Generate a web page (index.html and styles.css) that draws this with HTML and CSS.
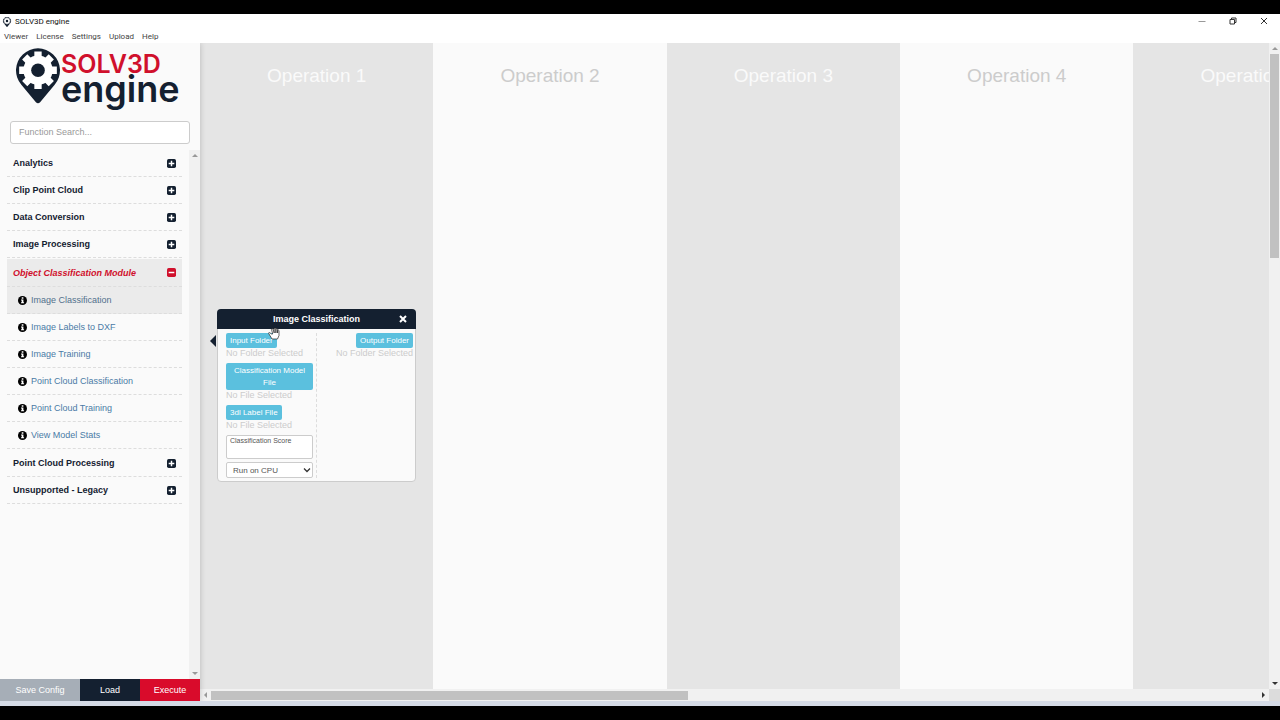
FILE: index.html
```html
<!DOCTYPE html>
<html lang="en">
<head>
    <meta charset="UTF-8">
    <meta name="viewport" content="width=device-width, initial-scale=1.0">
    <title>SOLV3D engine</title>
    <link rel="stylesheet" href="styles.css">
</head>
<body>
    <!-- Shared icons -->
    <svg class="icon-defs" width="0" height="0" aria-hidden="true">
        <symbol id="pin" viewBox="0 0 42 53">
            <path fill="#142030" d="M5.100 34.800A21 21 0 1 1 36.900 34.800L23 51.500Q21 53.500 19 51.500z"/>
            <circle cx="21" cy="21" r="14" fill="#fff"/>
            <path stroke="#fff" stroke-width="7" d="M21 3v36M3 21h36M8.300 8.300l25.400 25.400M33.700 8.300L8.300 33.700"/>
            <circle cx="21" cy="21" r="6.5" fill="#142030"/>
        </symbol>
        <symbol id="plus" viewBox="0 0 16 16">
            <rect width="16" height="16" rx="3" fill="currentColor"/>
            <path d="M8 3v10M3 8h10" stroke="#fff" stroke-width="2.6"/>
        </symbol>
        <symbol id="minus" viewBox="0 0 16 16">
            <rect width="16" height="16" rx="3" fill="currentColor"/>
            <path d="M3 8h10" stroke="#fff" stroke-width="2.6"/>
        </symbol>
        <symbol id="info" viewBox="0 0 16 16">
            <circle cx="8" cy="8" r="8" fill="#000"/>
            <path fill="#fff" d="M6.600 2.400h3v2.400h-3zM5.400 6h4.200v5h1.200v2H5.400v-2h1.200V8H5.400z"/>
        </symbol>
    </svg>

    <div class="window">
        <header class="titlebar">
            <svg class="app-icon"><use href="#pin"/></svg>
            <span class="app-title">SOLV3D engine</span>
            <div class="window-controls">
                <button type="button" aria-label="Minimize"><svg class="thin" viewBox="0 0 8 8"><path d="M0.500 4.500h7"/></svg></button>
                <button type="button" aria-label="Restore"><svg viewBox="0 0 8 8"><path d="M1 2.500h4.500V7H1zM2.500 2.500V1H7v4.500H5.500"/></svg></button>
                <button type="button" aria-label="Close"><svg viewBox="0 0 8 8"><path d="M1 1l6 6M7 1L1 7"/></svg></button>
            </div>
        </header>
        <nav class="menubar">
            <a href="#">Viewer</a>
            <a href="#">License</a>
            <a href="#">Settings</a>
            <a href="#">Upload</a>
            <a href="#">Help</a>
        </nav>

        <div class="workspace">
            <aside class="sidebar">
                <div class="logo">
                    <svg class="logo-pin"><use href="#pin"/></svg>
                    <div class="logo-text">
                        <div class="logo-name">SOLV3D</div>
                        <div class="logo-sub">engine</div>
                    </div>
                </div>
                <input class="search" type="text" placeholder="Function Search..." aria-label="Function Search">

                <div class="tree-wrap">
                    <ul class="tree">
                        <li><button type="button" class="group">Analytics<svg><use href="#plus"/></svg></button></li>
                        <li><button type="button" class="group">Clip Point Cloud<svg><use href="#plus"/></svg></button></li>
                        <li><button type="button" class="group">Data Conversion<svg><use href="#plus"/></svg></button></li>
                        <li><button type="button" class="group">Image Processing<svg><use href="#plus"/></svg></button></li>
                        <li class="open">
                            <button type="button" class="group">Object Classification Module<svg><use href="#minus"/></svg></button>
                            <ul class="functions">
                                <li class="active"><svg><use href="#info"/></svg><a href="#">Image Classification</a></li>
                                <li><svg><use href="#info"/></svg><a href="#">Image Labels to DXF</a></li>
                                <li><svg><use href="#info"/></svg><a href="#">Image Training</a></li>
                                <li><svg><use href="#info"/></svg><a href="#">Point Cloud Classification</a></li>
                                <li><svg><use href="#info"/></svg><a href="#">Point Cloud Training</a></li>
                                <li><svg><use href="#info"/></svg><a href="#">View Model Stats</a></li>
                            </ul>
                        </li>
                        <li><button type="button" class="group">Point Cloud Processing<svg><use href="#plus"/></svg></button></li>
                        <li><button type="button" class="group">Unsupported - Legacy<svg><use href="#plus"/></svg></button></li>
                    </ul>
                    <div class="scrollbar vertical">
                        <span class="arrow up"></span>
                        <span class="arrow down"></span>
                    </div>
                </div>

                <div class="actions">
                    <button type="button" class="btn-save">Save Config</button>
                    <button type="button" class="btn-load">Load</button>
                    <button type="button" class="btn-execute">Execute</button>
                </div>
            </aside>

            <main class="canvas-wrap">
                <div class="canvas">
                    <section class="operation"><h2>Operation 1</h2></section>
                    <section class="operation"><h2>Operation 2</h2></section>
                    <section class="operation"><h2>Operation 3</h2></section>
                    <section class="operation"><h2>Operation 4</h2></section>
                    <section class="operation"><h2>Operation 5</h2></section>

                    <!-- Function node -->
                    <div class="node">
                        <div class="node-header">
                            <span class="node-title">Image Classification</span>
                            <button type="button" class="node-close" aria-label="Remove"><svg viewBox="0 0 8 8"><path d="M1 1l6 6M7 1L1 7"/></svg></button>
                        </div>
                        <div class="node-body">
                            <div class="node-inputs">
                                <div class="port">
                                    <button type="button" class="btn-port">Input Folder</button>
                                    <span>No Folder Selected</span>
                                </div>
                                <div class="port">
                                    <button type="button" class="btn-port">Classification Model File</button>
                                    <span>No File Selected</span>
                                </div>
                                <div class="port">
                                    <button type="button" class="btn-port">3dl Label File</button>
                                    <span>No File Selected</span>
                                </div>
                                <textarea class="score" placeholder="Classification Score" aria-label="Classification Score"></textarea>
                                <div class="device">
                                    <select aria-label="Device">
                                        <option>Run on CPU</option>
                                        <option>Run on GPU</option>
                                    </select>
                                    <svg viewBox="0 0 8 8"><path d="M1 2.500l3 3 3-3"/></svg>
                                </div>
                            </div>
                            <div class="node-outputs">
                                <div class="port">
                                    <button type="button" class="btn-port">Output Folder</button>
                                    <span>No Folder Selected</span>
                                </div>
                            </div>
                        </div>
                        <svg class="hand" viewBox="0 0 12 13"><path d="M3.500 7L1.500 5.500Q0 5.500 1 7l3 5h5.500l1.500-3.500V3.500Q10.300 2.500 9.600 3.500V6 2.200Q8.600 1 7.900 2.200V6 1.500Q7 0.300 6.200 1.500V6L5 2Q4 1.200 3.500 2.300L4.700 7z"/></svg>
                    </div>
                </div>
                <div class="scrollbar vertical">
                    <span class="arrow up"></span>
                    <span class="thumb"></span>
                    <span class="arrow down dark"></span>
                </div>
                <div class="scrollbar horizontal">
                    <span class="arrow left"></span>
                    <span class="thumb"></span>
                    <span class="arrow right dark"></span>
                </div>
                <div class="corner"></div>
            </main>
        </div>
        <div class="taskbar"></div>
    </div>
</body>
</html>
```

FILE: styles.css
```css
* {
    box-sizing: border-box;
}

body {
    margin: 0;
    background-color: #000;
    font-family: "Liberation Sans", Arial, sans-serif;
    font-size: 9px;
    color: #142030;
}

button {
    font-family: inherit;
    border: none;
    cursor: pointer;
}

ul {
    list-style: none;
    margin: 0;
    padding: 0;
}

.icon-defs {
    position: absolute;
}

/* Window frame */
.window {
    display: flex;
    flex-direction: column;
    height: 100vh;
    padding: 14px 0;
}

.titlebar {
    display: flex;
    align-items: center;
    height: 15px;
    flex: none;
    padding-left: 2px;
    background-color: #fff;
}

.app-icon {
    width: 10px;
    height: 10px;
    margin-right: 3px;
}

.app-title,
.menubar {
    font-family: Roboto, "Open Sans", sans-serif;
    font-size: 8px;
}

.app-title {
    color: #111;
}

.window-controls {
    display: flex;
    margin-left: auto;
}

.window-controls button {
    width: 30px;
    height: 14px;
    padding: 0 0 2px;
    margin-right: 1px;
    background: none;
}

.window-controls svg {
    display: block;
    width: 8px;
    height: 8px;
    margin: 0 auto;
    fill: none;
    stroke: #333;
    stroke-width: 1;
}

.window-controls .thin {
    stroke: #999;
}

.menubar {
    display: flex;
    gap: 8px;
    flex: none;
    height: 14px;
    padding-left: 4px;
    line-height: 15px;
    background-color: #fff;
}

.menubar a {
    color: #444;
    text-decoration: none;
}

.workspace {
    display: flex;
    flex: 1;
    min-height: 0;
    overflow: hidden;
}

.taskbar {
    flex: none;
    height: 5px;
    background-color: #d5dbe6;
}

/* Sidebar */
.sidebar {
    display: flex;
    flex-direction: column;
    flex: none;
    width: 200px;
    background-color: #fafafa;
    box-shadow: 0 0 6px rgba(0, 0, 0, 0.2);
    z-index: 1;
}

.logo {
    display: flex;
    flex: none;
    height: 78px;
    padding: 5px 0 0 16px;
}

.logo-pin {
    width: 44px;
    height: 56px;
    margin-right: 1px;
}

.logo-text {
    font-family: Inter, sans-serif;
}

.logo-name {
    font-size: 25px;
    line-height: 32px;
    font-weight: 600;
    color: #d0102c;
}

.logo-sub {
    font-size: 36px;
    line-height: 18px;
    font-weight: 600;
}

.search {
    flex: none;
    height: 23px;
    margin: 0 10px 6px;
    padding: 0 8px 1px;
    border: 1px solid #ccc;
    border-radius: 3px;
    font-family: inherit;
    font-size: 9px;
    background-color: #fff;
}

.search::placeholder {
    color: #999;
}

.tree-wrap {
    display: flex;
    flex: 1;
    min-height: 0;
}

.tree {
    flex: 1;
    padding: 0 7px;
}

.group,
.functions li {
    display: flex;
    align-items: center;
    width: 100%;
    height: 27px;
    border-bottom: 1px dashed #ddd;
}

.group {
    justify-content: space-between;
    padding: 0 6px;
    background: none;
    font-size: 9px;
    font-weight: 700;
    color: #142030;
}

.group svg,
.functions svg {
    width: 9px;
    height: 9px;
}

.open {
    margin-top: 1px;
}

.open .group {
    height: 28px;
    background-color: #ebebeb;
    color: #d0102c;
    font-style: italic;
}

.functions {
    padding-bottom: 1px;
}

.functions li {
    padding-left: 11px;
}

.functions li.active {
    background-color: #ebebeb;
}

.functions a {
    margin-left: 4px;
    color: #4a7ba6;
    text-decoration: none;
}

.functions .active a {
    color: #52708c;
}

.actions {
    display: flex;
    flex: none;
    height: 22px;
}

.actions button {
    flex: 3;
    padding: 0;
    font-size: 9px;
    color: #fff;
}

.actions .btn-save {
    flex: 4;
    background-color: #a6aeb7;
}

.actions .btn-load {
    background-color: #142030;
}

.actions .btn-execute {
    background-color: #d90b2b;
}

/* Scrollbars */
.scrollbar {
    display: flex;
    align-items: center;
    background-color: #f1f1f1;
}

.scrollbar.vertical {
    flex-direction: column;
    width: 11px;
    padding: 4px 0;
}

.scrollbar.horizontal {
    height: 12px;
    padding: 0 4px;
}

.arrow {
    border: 3px solid transparent;
}

.arrow.up {
    border-top: none;
    border-bottom-color: #999;
}

.arrow.down {
    margin-top: auto;
    border-bottom: none;
    border-top-color: #999;
}

.arrow.left {
    border-left: none;
    border-right-color: #999;
}

.arrow.right {
    margin-left: auto;
    border-right: none;
    border-left-color: #999;
}

.arrow.down.dark {
    border-top-color: #333;
}

.arrow.right.dark {
    border-left-color: #333;
}

.thumb {
    background-color: #c1c1c1;
}

.vertical .thumb {
    width: 9px;
    height: 32%;
    margin-top: 4px;
}

.horizontal .thumb {
    width: 45%;
    height: 9px;
    margin-left: 4px;
}

/* Canvas */
.canvas-wrap {
    display: grid;
    grid-template-columns: 1fr 11px;
    grid-template-rows: 1fr 12px;
    flex: 1;
    min-width: 0;
}

.canvas {
    position: relative;
    display: flex;
    min-width: 0;
    overflow: hidden;
}

.operation {
    flex: 0 0 22%;
    flex-basis: 21.83%;
    background-color: #e5e5e5;
}

.operation:nth-child(even) {
    background-color: #fafafa;
}

.operation h2 {
    margin: 22px 0 0;
    font-size: 19px;
    line-height: 22px;
    font-weight: 400;
    text-align: center;
    color: #fafafa;
}

.operation:nth-child(even) h2 {
    color: #ccc;
}

.corner {
    background-color: #dcdcdc;
}

/* Function node */
.node {
    position: absolute;
    left: 17px;
    top: 266px;
    width: 199px;
    border: 1px solid #ccc;
    border-radius: 4px;
    background-color: #fafafa;
}

.node::before {
    content: "";
    position: absolute;
    left: -8px;
    top: 25px;
    border: 6px solid transparent;
    border-left: none;
    border-right-color: #142030;
}

.node-header {
    display: flex;
    align-items: center;
    height: 20px;
    margin: -1px -1px 0;
    padding: 0 9px 0 17px;
    border-radius: 4px 4px 0 0;
    background-color: #142030;
    color: #fff;
}

.node-title {
    flex: 1;
    font-size: 9px;
    font-weight: 700;
    text-align: center;
}

.node-close {
    padding: 0;
    background: none;
}

.node-close svg {
    display: block;
    width: 8px;
    height: 8px;
    stroke: #fff;
    stroke-width: 2;
}

.node-body {
    display: flex;
    padding: 4px 2px 3px 8px;
}

.node-inputs {
    display: flex;
    flex-direction: column;
    width: 91px;
    padding-right: 3px;
    border-right: 1px dashed #ddd;
}

.node-outputs {
    flex: 1;
    text-align: right;
}

.port {
    margin-bottom: 4px;
}

.port span {
    display: block;
    line-height: 11px;
    color: #ccc;
}

.btn-port {
    display: inline-block;
    vertical-align: top;
    padding: 2px 4px 1px;
    border-radius: 2px;
    background-color: #5bc0de;
    font-size: 8px;
    line-height: 12px;
    color: #fff;
}

.score {
    height: 24px;
    margin-bottom: 3px;
    padding: 1px 3px;
    border: 1px solid #ccc;
    border-radius: 2px;
    font-family: inherit;
    font-size: 7px;
    resize: none;
}

.score::placeholder {
    color: #555;
}

.device {
    position: relative;
}

.device select {
    display: block;
    width: 100%;
    height: 16px;
    padding: 0 6px;
    border: 1px solid #ccc;
    border-radius: 2px;
    background-color: #fff;
    font-family: inherit;
    font-size: 8px;
    color: #555;
    appearance: none;
}

/* Drop-down arrow over the select */
.device svg {
    position: absolute;
    right: 2px;
    top: 4px;
    width: 8px;
    height: 8px;
    fill: none;
    stroke: #333;
    stroke-width: 1.3;
    pointer-events: none;
}

/* Grab cursor over the node */
.hand {
    position: absolute;
    left: 50px;
    top: 17px;
    width: 12px;
    height: 13px;
    fill: #fff;
    stroke: #222;
    stroke-width: 0.7;
}
```
